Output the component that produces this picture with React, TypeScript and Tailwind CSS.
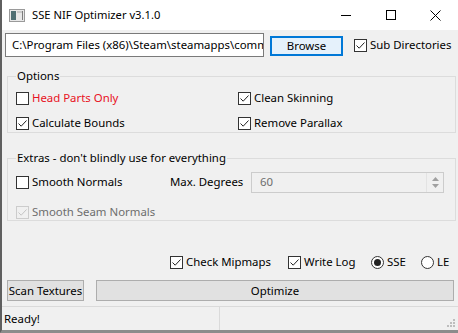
import React from "react";

// Windows-style checkbox
const Check = ({ checked, disabled }: { checked?: boolean; disabled?: boolean }) => (
  <span
    className={`w-[13px] h-[13px] shrink-0 border flex items-center justify-center ${
      disabled ? "border-[#cccccc] bg-[#f0f0f0]" : "border-[#333333] bg-white"
    }`}
  >
    {checked && (
      <svg width="11" height="11" viewBox="0 0 11 11">
        <path
          d="M1.5 5.5 L4.2 8.2 L9.5 2.5"
          fill="none"
          stroke={disabled ? "#c4c4c4" : "#222"}
          strokeWidth="1"
        />
      </svg>
    )}
  </span>
);

const CheckItem = ({
  label,
  checked,
  disabled,
  red,
}: {
  label: string;
  checked?: boolean;
  disabled?: boolean;
  red?: boolean;
}) => (
  <div className="flex items-center gap-[3px] h-[18px] whitespace-nowrap">
    <Check checked={checked} disabled={disabled} />
    <span
      className={`leading-none ${red ? "text-[#e81123]" : disabled ? "text-[#6d6d6d]" : "text-black"}`}
    >
      {label}
    </span>
  </div>
);

const Radio = ({ label, checked }: { label: string; checked?: boolean }) => (
  <div className="flex items-center gap-[3px] h-[18px]">
    <span className="w-[13px] h-[13px] rounded-full border border-[#333333] bg-white flex items-center justify-center">
      {checked && <span className="w-[7px] h-[7px] rounded-full bg-[#222]" />}
    </span>
    <span className="leading-none">{label}</span>
  </div>
);

export default function App() {
  return (
    <div
      className="w-[458px] h-[333px] flex flex-col bg-[#f0f0f0] border-l-2 border-l-[#5f5f5f] border-b-[3px] border-b-[#8c8c8c] text-[11.4px] text-black overflow-hidden"
      style={{ fontFamily: '"Noto Sans", "Open Sans", sans-serif' }}
    >
      {/* Title bar */}
      <header className="h-[30px] shrink-0 bg-white flex items-center">
        <svg width="16" height="13" viewBox="0 0 16 13" className="ml-[7px]">
          <rect x="0.5" y="0.5" width="15" height="12" fill="#e8e8e8" stroke="#9a9a9a" />
          <rect x="2" y="2" width="5" height="9" fill="#4f6f73" />
          <rect x="8" y="2" width="6" height="2" fill="#c9c9c9" />
          <rect x="13" y="2" width="1" height="9" fill="#7c7c7c" />
        </svg>
        <span className="ml-[7px] text-[11.2px]">SSE NIF Optimizer v3.1.0</span>
        <div className="ml-auto flex h-full">
          <div className="w-[45px] flex items-center justify-center">
            <span className="w-[10px] h-px bg-black" />
          </div>
          <div className="w-[45px] flex items-center justify-center">
            <span className="w-[10px] h-[10px] border border-black" />
          </div>
          <div className="w-[45px] flex items-center justify-center">
            <svg width="11" height="11" viewBox="0 0 11 11">
              <path d="M0.5 0.5 L10.5 10.5 M10.5 0.5 L0.5 10.5" stroke="#000" strokeWidth="1" />
            </svg>
          </div>
        </div>
      </header>

      {/* Path row */}
      <div className="flex items-start mt-[3px] pl-[3px] h-[24px]">
        <div className="w-[259px] h-[24px] bg-white border border-[#7a7a7a] flex items-center px-[6px] overflow-hidden whitespace-nowrap">
          C:\Program Files (x86)\Steam\steamapps\common
        </div>
        <button className="ml-[6px] mt-[3px] w-[73px] h-[20px] bg-[#e5f1fb] border-2 border-[#0078d7] flex items-center justify-center">
          Browse
        </button>
        <div className="ml-[11px] mt-[3px]">
          <CheckItem label="Sub Directories" checked />
        </div>
      </div>

      {/* Options */}
      <fieldset className="mt-[12px] ml-[5px] w-[449px] h-[64px] border border-[#dcdcdc] px-[8px]">
        <legend className="px-[1px] leading-[14px]">Options</legend>
        <div className="grid grid-cols-[222px_1fr] gap-y-[7px] mt-[6px]">
          <CheckItem label="Head Parts Only" red />
          <CheckItem label="Clean Skinning" checked />
          <CheckItem label="Calculate Bounds" checked />
          <CheckItem label="Remove Parallax" checked />
        </div>
      </fieldset>

      {/* Extras */}
      <fieldset className="mt-[18px] ml-[5px] w-[449px] h-[70px] border border-[#dcdcdc] px-[8px]">
        <legend className="px-[1px] leading-[14px]">Extras - don't blindly use for everything</legend>
        <div className="flex items-center mt-[7px] h-[20px]">
          <div className="w-[154px]">
            <CheckItem label="Smooth Normals" />
          </div>
          <span className="w-[81px]">Max. Degrees</span>
          <div className="w-[193px] h-[21px] bg-[#f0f0f0] border border-[#cccccc] flex items-center">
            <span className="pl-[8px] text-[#6d6d6d] flex-1">60</span>
            <div className="w-[17px] h-full flex flex-col items-center justify-center gap-[3px] border-l border-[#e3e3e3]">
              <svg width="7" height="4" viewBox="0 0 7 4">
                <path d="M3.5 0 L7 4 L0 4 Z" fill="#a0a0a0" />
              </svg>
              <svg width="7" height="4" viewBox="0 0 7 4">
                <path d="M0 0 L7 0 L3.5 4 Z" fill="#a0a0a0" />
              </svg>
            </div>
          </div>
        </div>
        <div className="mt-[11px]">
          <CheckItem label="Smooth Seam Normals" checked disabled />
        </div>
      </fieldset>

      {/* Bottom options + buttons */}
      <div className="mt-auto">
        <div className="flex items-center pl-[168px] h-[18px]">
          <div className="w-[118px]">
            <CheckItem label="Check Mipmaps" checked />
          </div>
          <div className="w-[83px]">
            <CheckItem label="Write Log" checked />
          </div>
          <div className="w-[50px]">
            <Radio label="SSE" checked />
          </div>
          <Radio label="LE" />
        </div>
        <div className="flex mt-[9px] pl-[5px] gap-[12px] h-[21px]">
          <button className="w-[77px] h-full bg-[#e1e1e1] border border-[#adadad] flex items-center justify-center whitespace-nowrap">
            Scan Textures
          </button>
          <button className="w-[358px] h-full bg-[#e1e1e1] border border-[#adadad] flex items-center justify-center">
            Optimize
          </button>
        </div>
      </div>

      {/* Status bar */}
      <footer className="mt-[5px] h-[24px] shrink-0 border-t border-[#dadada] flex items-center">
        <div className="w-[218px] h-full flex items-center pl-[2px] border-r border-[#dadada]">Ready!</div>
        <div className="flex-1 h-full flex items-end justify-end pr-[2px] pb-[2px]">
          <svg width="10" height="10" viewBox="0 0 10 10">
            <rect x="7" y="1" width="2" height="2" fill="#bdbdbd" />
            <rect x="4" y="4" width="2" height="2" fill="#bdbdbd" />
            <rect x="7" y="4" width="2" height="2" fill="#bdbdbd" />
            <rect x="1" y="7" width="2" height="2" fill="#bdbdbd" />
            <rect x="4" y="7" width="2" height="2" fill="#bdbdbd" />
            <rect x="7" y="7" width="2" height="2" fill="#bdbdbd" />
          </svg>
        </div>
      </footer>
    </div>
  );
}
